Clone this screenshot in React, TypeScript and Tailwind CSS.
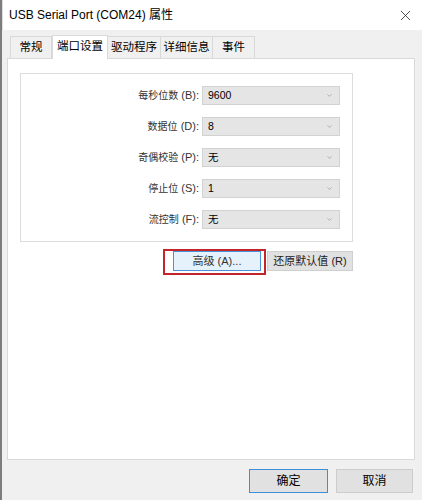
import { X, ChevronDown } from 'lucide-react';

const tabs = ['常规', '端口设置', '驱动程序', '详细信息', '事件'];
const tabWidths = ['w-[42px]', 'w-[56px]', 'w-[54px]', 'w-[53px]', 'w-[43px]'];

const rows = [
  { label: '每秒位数', key: '(B):', value: '9600' },
  { label: '数据位', key: '(D):', value: '8' },
  { label: '奇偶校验', key: '(P):', value: '无' },
  { label: '停止位', key: '(S):', value: '1' },
  { label: '流控制', key: '(F):', value: '无' },
];

function Combo({ value }: { value: string }) {
  return (
    <div className="w-[138px] h-[19px] bg-[#e5e5e5] border border-[#d2d2d2] flex items-center justify-between pl-[5px] pr-[6px] text-[10.5px] text-black">
      <span>{value}</span>
      <ChevronDown size={7} strokeWidth={2} className="text-[#8a8a8a]" />
    </div>
  );
}

export default function App() {
  return (
    <div
      className="w-[422px] h-[500px] bg-[#f0f0f0] border-l-2 border-[#7d7d7d] flex flex-col overflow-hidden"
      style={{ fontFamily: '"Liberation Sans", "Noto Sans CJK SC", sans-serif' }}
    >
      <div className="h-[30px] bg-white flex items-center justify-between pl-[6px] pr-[8px] shrink-0 border-l border-[#dedede]">
        <span className="text-[12px] text-black">USB Serial Port (COM24) 属性</span>
        <X size={17} strokeWidth={1.1} className="text-[#222]" />
      </div>

      <div className="flex-1 flex flex-col pl-[5px] pr-[7px] pt-[4px]">
        <div className="flex items-end pl-[3px] h-[24px] relative z-10">
          {tabs.map((t, i) =>
            i === 1 ? (
              <div
                key={t}
                className={`${tabWidths[i]} h-[24px] bg-white border border-b-0 border-[#d9d9d9] flex items-center justify-center text-[11.5px] text-black -mb-px pb-[2px]`}
              >
                {t}
              </div>
            ) : (
              <div
                key={t}
                className={`${tabWidths[i]} h-[22px] bg-[#f0f0f0] border border-b-0 border-[#d9d9d9] flex items-center justify-center text-[11.5px] text-black ${i === 0 ? '' : '-ml-px'}`}
              >
                {t}
              </div>
            )
          )}
        </div>

        <div className="h-[402px] bg-white border border-[#d9d9d9] pl-[12px] pt-[14px]">
          <div className="w-[333px] h-[169px] border border-[#dcdcdc] flex flex-col gap-[12px] pt-[12px] pr-[12px]">
            {rows.map((r) => (
              <div key={r.key} className="flex items-center justify-end gap-[3px] h-[19px]">
                <span className="text-[11px] text-[#333]">
                  <span className="text-[10px]">{r.label}</span> {r.key}
                </span>
                <Combo value={r.value} />
              </div>
            ))}
          </div>

          <div className="w-[333px] flex justify-end items-start mt-[7px]">
            <div className="border-2 border-[#c4252b] pl-[8px] pr-[3px] pb-[2px]">
              <div className="w-[88px] h-[20px] bg-[#e5f1fb] border border-[#4a93d8] flex items-center justify-center text-[11px] text-[#333]">
                高级 (A)...
              </div>
            </div>
            <div className="ml-px mt-[2px] w-[86px] h-[20px] bg-[#e1e1e1] border border-[#cfcfcf] flex items-center justify-center text-[11px] text-[#222]">
              还原默认值 (R)
            </div>
          </div>
        </div>

        <div className="flex justify-end gap-[8px] pt-[9px] pr-[2px]">
          <div className="w-[79px] h-[24px] bg-[#e1e1e1] border border-[#3c8fd8] flex items-center justify-center text-[12px] text-black">
            确定
          </div>
          <div className="w-[77px] h-[24px] bg-[#e1e1e1] border border-[#cccccc] flex items-center justify-center text-[12px] text-black">
            取消
          </div>
        </div>
      </div>
    </div>
  );
}
